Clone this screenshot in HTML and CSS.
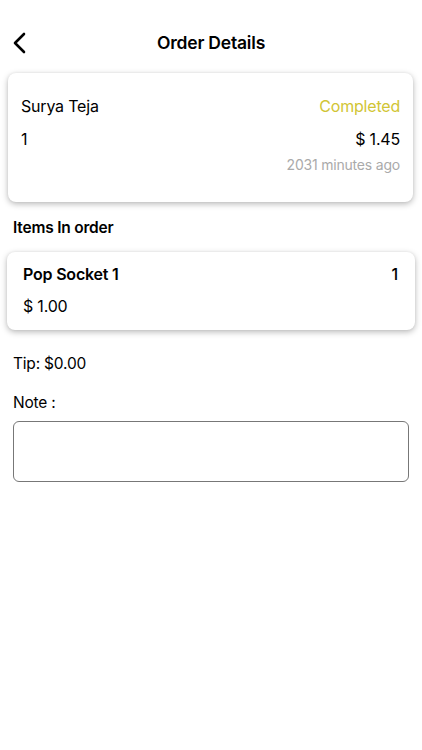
FILE: index.html
```html
<!DOCTYPE html>
<html>
<head>
<meta charset="utf-8">
<link rel="stylesheet" href="styles.css">
</head>
<body>
<div class="screen">
  <header class="header">
    <span class="back">
      <svg width="14" height="22" viewBox="0 0 14 22"><path d="M12 2 L3 11 L12 20" fill="none" stroke="#000" stroke-width="2.6" stroke-linecap="round" stroke-linejoin="round"/></svg>
    </span>
    <h1 class="title">Order Details</h1>
  </header>

  <section class="card order-card">
    <div class="row row-top">
      <span class="name">Surya Teja</span>
      <span class="status">Completed</span>
    </div>
    <div class="row row-mid">
      <span>1</span>
      <span>$ 1.45</span>
    </div>
    <div class="row row-time">
      <span class="time">2031 minutes ago</span>
    </div>
  </section>

  <h2 class="section-title">Items In order</h2>

  <section class="card item-card">
    <div class="row">
      <span class="item-name">Pop Socket 1</span>
      <span class="item-qty">1</span>
    </div>
    <div class="row row-price">
      <span>$ 1.00</span>
    </div>
  </section>

  <p class="tip">Tip: $0.00</p>
  <p class="note-label">Note :</p>
  <div class="note-box"></div>
</div>
</body>
</html>
```
FILE: styles.css
```css
* { box-sizing: border-box; }
html, body {
  margin: 0;
  padding: 0;
  background: #fff;
}
body {
  font-family: Inter, "Noto Sans", Roboto, sans-serif;
  color: #000;
  width: 422px;
  height: 750px;
  overflow: hidden;
}
.screen {
  display: flex;
  flex-direction: column;
}
.header {
  position: relative;
  margin-top: 20px;
  height: 46px;
  display: flex;
  align-items: center;
  justify-content: center;
}
.back {
  position: absolute;
  left: 12px;
  top: 12px;
  display: flex;
}
.title {
  margin: 0;
  font-size: 17.5px;
  font-weight: 600;
  line-height: 22px;
  letter-spacing: -0.2px;
}
.card {
  background: #fff;
  border-radius: 8px;
  box-shadow: 0 2px 6px rgba(0, 0, 0, 0.28), 0 0 3px rgba(0, 0, 0, 0.05);
}
.order-card {
  margin: 7px 9px 0 8px;
  padding: 22px 13px 27px 13px;
  display: flex;
  flex-direction: column;
}
.row {
  display: flex;
  justify-content: space-between;
  align-items: center;
  font-size: 16px;
  line-height: 22px;
  letter-spacing: -0.2px;
}
.row-mid { margin-top: 11px; }
.row-time {
  margin-top: 5px;
  justify-content: flex-end;
}
.status { color: #d1c534; }
.time {
  color: #aaaaaa;
  font-size: 14px;
  line-height: 20px;
}
.section-title {
  margin: 15px 0 0 13px;
  font-size: 15.5px;
  font-weight: 600;
  line-height: 22px;
  letter-spacing: -0.2px;
}
.item-card {
  margin: 13px 7px 0 7px;
  padding: 11px 17px 13px 16px;
}
.item-name { font-weight: 600; }
.item-qty { font-weight: 500; }
.row-price { margin-top: 10px; }
.tip, .note-label {
  margin: 23px 0 0 13px;
  font-size: 15.5px;
  line-height: 22px;
  letter-spacing: -0.2px;
}
.note-label { margin-top: 17px; }
.note-box {
  margin: 7px 13px 0 13px;
  height: 61px;
  border: 1px solid #777;
  border-radius: 6px;
}
```
